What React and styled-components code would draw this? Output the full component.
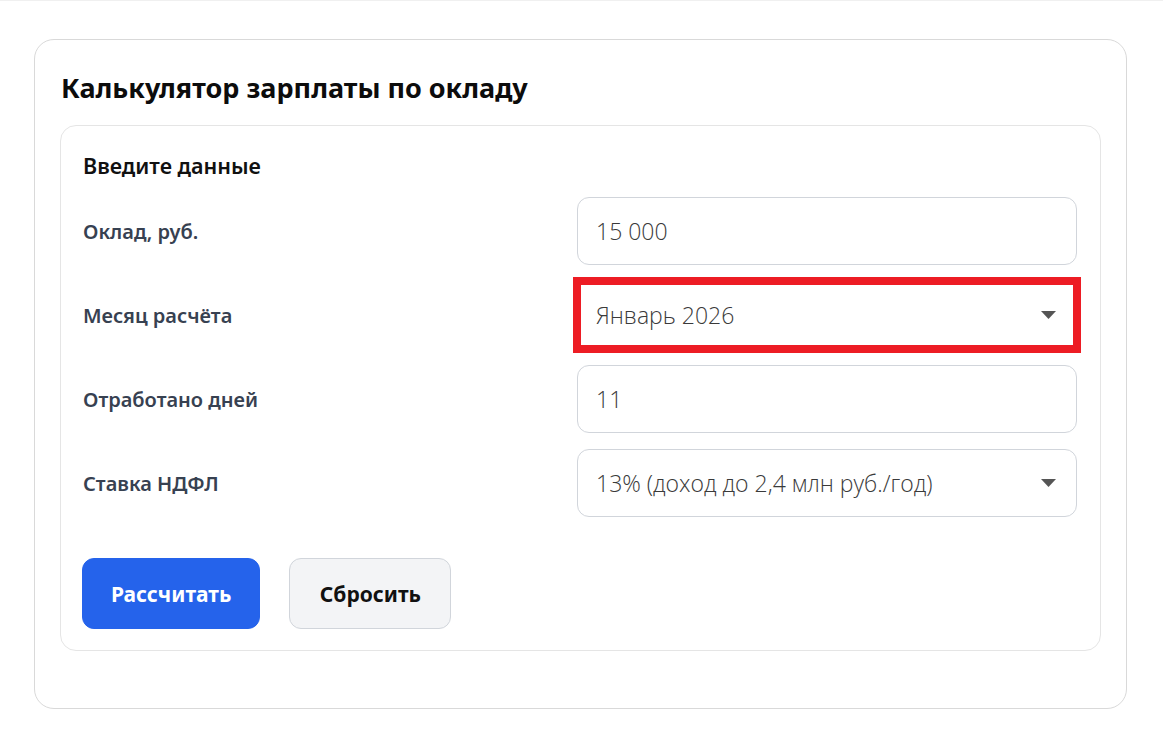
import styled, { createGlobalStyle } from 'styled-components';

const GlobalStyle = createGlobalStyle`
    html, body {
        margin: 0;
        padding: 0;
        background: #ffffff;
    }
    body {
        font-family: "Noto Sans", "Open Sans", sans-serif;
        color: #111;
        border-top: 1px solid #f0f0f0;
    }
`;

const Page = styled.div`
    padding: 38px 36px 32px 34px;
`;

const OuterCard = styled.section`
    border: 1px solid #d9d9d9;
    border-radius: 20px;
    padding: 26px 25px 57px 25px;
    background: #fff;
`;

const Title = styled.h1`
    margin: 0 0 15px 1px;
    font-size: 27px;
    font-weight: 700;
    line-height: 44px;
    color: #0c0c0c;
`;

const InnerCard = styled.div`
    border: 1px solid #e5e5e5;
    border-radius: 16px;
    padding: 25px 23px 21px 21px;
`;

const SectionTitle = styled.h2`
    margin: 0 0 16px 1px;
    font-size: 21.5px;
    font-weight: 600;
    line-height: 30px;
    color: #111;
`;

const Form = styled.form`
    display: grid;
    grid-template-columns: 1fr 500px;
    row-gap: 16px;
    align-items: center;
`;

const Label = styled.label`
    font-size: 20px;
    font-weight: 600;
    color: #374151;
    padding-left: 1px;
`;

const fieldBase = `
    box-sizing: border-box;
    width: 100%;
    height: 68px;
    border: 1px solid #d1d5db;
    border-radius: 12px;
    padding: 0 18px;
    font-family: "Open Sans", "Noto Sans", sans-serif;
    font-size: 23px;
    font-weight: 300;
    color: #3a3a3a;
    background: #fff;
`;

const TextInput = styled.input`
    ${fieldBase}
    &:focus {
        outline: none;
    }
`;

const SelectWrap = styled.div`
    position: relative;
    ${({ $highlight }) => $highlight && `
        outline: 8px solid #ed1c24;
        outline-offset: -4px;
        border-radius: 0;
    `}
`;

const Select = styled.select`
    ${fieldBase}
    appearance: none;
    padding-right: 50px;
    ${({ $highlight }) => $highlight && `border-color: transparent; border-radius: 0;`}
    &:focus {
        outline: none;
    }
`;

const Arrow = styled.svg`
    position: absolute;
    right: 21px;
    top: 50%;
    margin-top: -4px;
    pointer-events: none;
`;

const Actions = styled.div`
    display: flex;
    gap: 29px;
    margin-top: 41px;
`;

const Button = styled.button`
    height: 71px;
    padding: 0 28px;
    min-width: ${({ $primary }) => ($primary ? '178px' : '162px')};
    border-radius: 12px;
    font-family: "Noto Sans", sans-serif;
    font-size: 21px;
    font-weight: 700;
    cursor: pointer;
    border: 1px solid ${({ $primary }) => ($primary ? '#2563eb' : '#d1d5db')};
    background: ${({ $primary }) => ($primary ? '#2563eb' : '#f3f4f6')};
    color: ${({ $primary }) => ($primary ? '#ffffff' : '#111111')};
`;

function DropdownArrow() {
    return (
        <Arrow width="15" height="8" viewBox="0 0 15 8">
            <path d="M0 0 L15 0 L7.5 8 Z" fill="#555" />
        </Arrow>
    );
}

function Field({ select, highlight, options, value }) {
    if (!select) return <TextInput defaultValue={value} />;
    return (
        <SelectWrap $highlight={highlight}>
            <Select $highlight={highlight} defaultValue={value}>
                {options.map(o => <option key={o}>{o}</option>)}
            </Select>
            <DropdownArrow />
        </SelectWrap>
    );
}

function FieldRow({ label, ...rest }) {
    return (
        <>
            <Label>{label}</Label>
            <Field {...rest} />
        </>
    );
}

const rows = [
    { label: 'Оклад, руб.', value: '15 000' },
    { label: 'Месяц расчёта', value: 'Январь 2026', select: true, highlight: true, options: ['Январь 2026', 'Февраль 2026', 'Март 2026'] },
    { label: 'Отработано дней', value: '11' },
    { label: 'Ставка НДФЛ', value: '13% (доход до 2,4 млн руб./год)', select: true, options: ['13% (доход до 2,4 млн руб./год)', '15% (доход свыше 2,4 млн руб./год)'] },
];

export default function App() {
    return (
        <>
            <GlobalStyle />
            <Page>
                <OuterCard>
                    <Title>Калькулятор зарплаты по окладу</Title>
                    <InnerCard>
                        <SectionTitle>Введите данные</SectionTitle>
                        <Form onSubmit={e => e.preventDefault()}>
                            {rows.map(r => (
                                <FieldRow key={r.label} {...r} />
                            ))}
                        </Form>
                        <Actions>
                            <Button $primary type="button">Рассчитать</Button>
                            <Button type="button">Сбросить</Button>
                        </Actions>
                    </InnerCard>
                </OuterCard>
            </Page>
        </>
    );
}
